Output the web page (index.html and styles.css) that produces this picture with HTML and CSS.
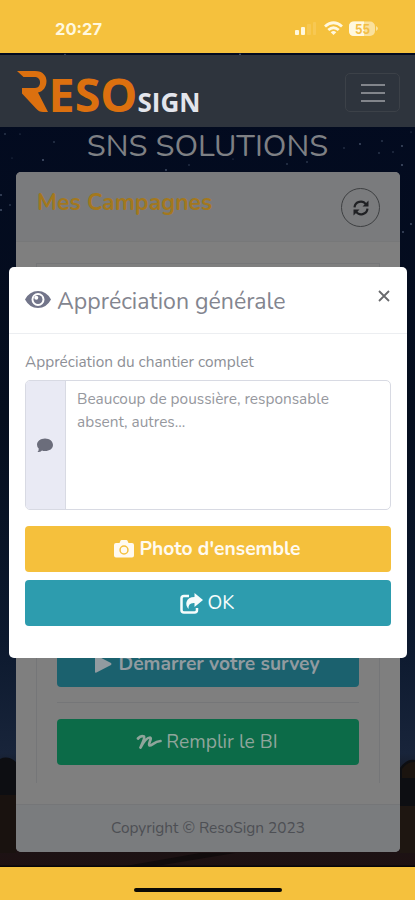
FILE: index.html
```html
<!DOCTYPE html>
<html lang="fr">
<head>
<meta charset="utf-8">
<meta name="viewport" content="width=device-width">
<title>ResoSign</title>
<link rel="stylesheet" href="styles.css">
</head>
<body>
<div class="phone">
  <header class="status">
    <span class="clock">20:27</span>
    <svg class="signals" width="90" height="20" viewBox="0 0 90 20">
      <g fill="#fff8df"><rect x="0" y="11" width="4" height="5" rx="1"/><rect x="6" y="8" width="4" height="8" rx="1"/></g>
      <g fill="#f7c853"><rect x="12" y="5" width="4" height="11" rx="1"/><rect x="18" y="3" width="3" height="13" rx="1"/></g>
      <g fill="none" stroke="#fff8df" stroke-width="2.800"><path d="M30 7.500Q38.500 0 47 7.500"/><path d="M33.300 11Q38.500 6.500 43.700 11"/></g>
      <path d="M35.700 13.200Q38.500 11 41.300 13.200L38.500 16Z" fill="#fff8df"/>
      <rect x="54" y="2.500" width="26" height="14.500" rx="5" fill="#fae19d"/>
      <path d="M59 2.500H69V17H59Q54 17 54 12V7.500Q54 2.500 59 2.500Z" fill="#fff8df"/>
      <path d="M81 7Q85 9.500 81 12Z" fill="#fae19d"/>
      <text x="60" y="14.500" textLength="15" lengthAdjust="spacingAndGlyphs" class="battery">55</text>
    </svg>
  </header>

  <main class="page">
    <svg class="sky" viewBox="0 53 415 814" preserveAspectRatio="none">
      <defs><linearGradient id="night" x1="0" y1="0" x2="0" y2="1">
        <stop offset="0" stop-color="#020a20"/><stop offset=".45" stop-color="#050e1e"/><stop offset=".72" stop-color="#0c192e"/><stop offset=".86" stop-color="#18243a"/><stop offset=".9" stop-color="#15151a"/><stop offset="1" stop-color="#1e1112"/>
      </linearGradient></defs>
      <rect y="53" width="415" height="814" fill="url(#night)"/>
      <path d="M0 759Q8 755 16 762V800H0ZM400 768Q407 758 415 760V806H400Z" fill="#0d0e12"/>
      <path d="M402 769Q408 761 415 762V778H402Z" fill="#1b140f"/>
      <path d="M0 795H16V853H0Z" fill="#19120f"/>
      <path d="M400 806H415V853H400Z" fill="#1e1611"/>
      <path d="M150 867L235 853H200L120 867Z" fill="#110b0c"/>
      <path d="M0 865.500H415V867H0Z" fill="#080608"/>
      <g fill="#46526a"><circle cx="5" cy="134" r=".8"/><circle cx="20" cy="134" r=".6"/><circle cx="54" cy="142" r=".8"/><circle cx="43" cy="160" r="1.100"/><circle cx="12" cy="158" r=".5"/><circle cx="1" cy="195" r=".9"/><circle cx="10" cy="205" r=".8"/><circle cx="1" cy="210" r="1"/><circle cx="166" cy="170" r=".9"/><circle cx="189" cy="165" r=".7"/><circle cx="233" cy="159" r=".6"/><circle cx="287" cy="164" r=".8"/><circle cx="307" cy="162" r=".8"/><circle cx="344" cy="148" r=".7"/><circle cx="360" cy="144" r=".9"/><circle cx="382" cy="141" r=".8"/><circle cx="379" cy="153" r=".8"/><circle cx="393" cy="152" r=".7"/><circle cx="402" cy="146" r=".9"/><circle cx="402" cy="165" r="1"/><circle cx="411" cy="132" r=".6"/><circle cx="411" cy="224" r=".9"/><circle cx="403" cy="232" r=".9"/><circle cx="65" cy="54.500" r=".8"/><circle cx="240" cy="54.500" r="1"/></g>
    </svg>

    <nav class="navbar">
      <svg class="brand" width="194" height="70" viewBox="14 56 194 70">
        <path d="M17 71H35C43 71 46.500 76 46.500 81C46.500 87 43 91.500 38 92.500L48 112H43Q39 112 36 108.500L22 93.500V88H35C38.500 88 40 85 40 82.500C40 79 38 77 34 77H23.500Z" fill="#dc700f"/>
        <text x="48.500" y="111.500" textLength="89" lengthAdjust="spacingAndGlyphs" class="logo-main">ESO</text>
        <text x="137.500" y="111.500" textLength="63" lengthAdjust="spacingAndGlyphs" class="logo-sub">SIGN</text>
      </svg>
      <div class="toggler"><i></i><i></i><i></i></div>
    </nav>

    <h1 class="company"><span>SNS SOLUTIONS</span></h1>

    <section class="card">
      <header class="card-header">
        <h2>Mes Campagnes</h2>
        <div class="refresh">
          <svg width="18" height="18" viewBox="0 0 18 18" fill="none" stroke="#202124" stroke-width="2.200"><path d="M2.500 8.300A6.300 6.300 0 0 1 14 5.500M15.500 9.700A6.300 6.300 0 0 1 4 12.500"/><path d="M16.500 1.500V7.500H10.500ZM1.500 16.500V10.500H7.500Z" fill="#202124" stroke="none"/></svg>
        </div>
      </header>
      <div class="card-body">
        <div class="campaign">
          <div class="btn survey"><svg width="17" height="18" viewBox="0 0 17 18"><path d="M0 1Q0 0 1.500 .5L16 8Q17 9 16 10L1.500 17.500Q0 18 0 17Z" fill="#929ba0"/></svg><span>Démarrer votre survey</span></div>
          <div class="rule"></div>
          <div class="btn fill"><svg width="26" height="17" viewBox="0 0 26 17" fill="none" stroke="#8fa59b" stroke-width="2.700" stroke-linecap="round" stroke-linejoin="round"><path d="M2 4.500Q5 1 8 2.500C9 4 7 8 4.500 13.500Q10 3.500 14 3.500C16.500 4 11.500 10.500 13.500 11.500C16 12 18 7.500 24.500 7"/></svg><span>Remplir le BI</span></div>
        </div>
      </div>
      <footer class="card-footer"><span>Copyright © ResoSign 2023</span></footer>
    </section>

    <div class="modal">
      <header class="modal-header">
        <svg class="eye" width="26" height="19" viewBox="0 0 26 19"><path fill-rule="evenodd" d="M0 9.500Q4.500 1 13 1T26 9.500Q21.500 18 13 18T0 9.500ZM13 3A6.500 6.500 0 1 0 13 16A6.500 6.500 0 1 0 13 3Z" fill="#72758a"/><circle cx="13" cy="9.500" r="4.500" fill="#72758a"/><circle cx="11.300" cy="7.800" r="2" fill="#fff"/></svg>
        <h3>Appréciation générale</h3>
        <svg class="close" width="12" height="12" viewBox="0 0 12 12"><path d="M1 1L11 11M11 1L1 11" stroke="#68696c" stroke-width="1.800"/></svg>
      </header>
      <div class="modal-body">
        <label>Appréciation du chantier complet</label>
        <div class="field">
          <div class="addon"><svg width="16" height="15" viewBox="0 0 16 15"><path d="M8 .5C12.500 .5 16 3.300 16 7S12.500 13 8 13Q6.300 13 5 12.500Q3 14.500 .5 14Q2 12.500 1.700 10.500Q0 9 0 6.700C0 3.300 3.500 .5 8 .5Z" fill="#6b6d7b"/></svg></div>
          <p><span class="line-a">Beaucoup de poussière, responsable</span><br><span class="line-b">absent, autres...</span></p>
        </div>
        <div class="btn photo"><svg width="20" height="18" viewBox="0 0 20 18"><path fill-rule="evenodd" d="M2 3H5.500L6.500 .8Q6.800 0 7.700 0H12.300Q13.200 0 13.500 .8L14.500 3H18Q20 3 20 5V15.500Q20 17.500 18 17.500H2Q0 17.500 0 15.500V5Q0 3 2 3ZM10 5.300A4.700 4.700 0 1 0 10 14.700A4.700 4.700 0 1 0 10 5.300ZM10 6.800A3.200 3.200 0 1 1 10 13.200A3.200 3.200 0 1 1 10 6.800Z" fill="#fffaf0"/></svg><span>Photo d'ensemble</span></div>
        <div class="btn ok"><svg width="23" height="21" viewBox="0 0 23 21"><path d="M9 3H4Q1.500 3 1.500 5.500V17Q1.500 19.500 4 19.500H14.500Q17 19.500 17 17V15" fill="none" stroke="#f5fcfc" stroke-width="2.500"/><path d="M14.500 0L23 7L14.500 14V10Q8 9.500 8.500 16Q5.500 12.500 6.500 9Q8 4 14.500 4Z" fill="#f5fcfc"/></svg><span>OK</span></div>
      </div>
    </div>
  </main>

  <div class="home"><i></i></div>
</div>
</body>
</html>
```
FILE: styles.css
```css
* { box-sizing: border-box; }
body { margin: 0; font-family: Nunito, Lato, "Open Sans", sans-serif; }
h1, h2, h3, p { margin: 0; font-weight: 400; }
svg { display: block; flex: none; }
span, h2, h3, label { white-space: nowrap; }

.phone { width: 415px; height: 900px; display: flex; flex-direction: column; overflow: hidden; background: #f5c13d; }
.status { height: 53px; flex: none; display: flex; justify-content: space-between; padding: 19px 30px 0 55px; }
.clock { font: 700 16.5px/20px Inter, sans-serif; color: #fff8df; }
.battery { font: 700 13px Inter, sans-serif; fill: #f3bd45; }

.page { position: relative; flex: 1; display: flex; flex-direction: column; }
.sky { position: absolute; inset: 0; width: 100%; height: 100%; }
.navbar { position: relative; height: 72px; margin-top: 2px; flex: none; display: flex; align-items: flex-start; justify-content: space-between; padding: 1px 15px 0 14px; background: #2e343d; }
.brand { overflow: visible; }
.logo-main { font: 700 47px/1 "Open Sans", sans-serif; fill: #dc700f; }
.logo-sub { font: 700 27px/1 "Open Sans", sans-serif; fill: #e3e5ec; }
.toggler { width: 55px; height: 39px; margin-top: 17px; border: 1px solid #3c4148; border-radius: 5px; display: flex; flex-direction: column; align-items: center; justify-content: center; gap: 6px; }
.toggler i { width: 24px; height: 2px; background: #82858b; }
.company { position: relative; height: 45px; flex: none; text-align: center; font-size: 30.8px; line-height: 38px; color: #7e8084; }

.card { position: relative; width: 384px; height: 680px; margin-left: 16px; display: flex; flex-direction: column; border-radius: 5px; overflow: hidden; background: #7f7f7f; }
.card-header { height: 70px; flex: none; display: flex; justify-content: space-between; padding: 16px 20px 0 21px; background: #7a7b7d; border-bottom: 1px solid #777879; }
.card-header h2 { font-weight: 700; font-size: 23px; line-height: 29px; color: #a3781d; }
.refresh { width: 39px; height: 39px; border: 1px solid #3e4042; border-radius: 50%; display: flex; align-items: center; justify-content: center; }
.card-body { flex: 1; padding: 21px 20px 20px 20px; }
.campaign { height: 520px; border: 1px solid #757678; border-bottom: 0; padding: 0 20px 18px; display: flex; flex-direction: column; justify-content: flex-end; }
.card-footer { height: 48px; flex: none; background: #7a7c7e; border-top: 1px solid #757678; text-align: center; font-size: 15.4px; line-height: 45px; color: #4d4f54; }

.btn { height: 46px; flex: none; display: flex; align-items: center; justify-content: center; border-radius: 4px; font-size: 19.25px; line-height: 24px; }
.survey { background: #1b616e; color: #929ba0; font-weight: 700; gap: 6px; padding-right: 1px; }
.fill { background: #0c6b48; color: #8fa59b; gap: 4px; padding-right: 2px; }
.rule { height: 1px; margin: 15px 0 16px; background: #757678; }

.modal { position: absolute; left: 9px; top: 214px; width: 398px; height: 391px; background: #fff; border-radius: 5px; }
.modal-header { height: 67px; display: flex; align-items: flex-start; padding: 0 17px 0 16px; border-bottom: 1px solid #eceef1; }
.eye { margin-top: 23px; }
.modal-header h3 { margin: 18px 0 0 6px; font-size: 23.1px; line-height: 34px; color: #83858f; }
.close { margin: 23px 0 0 auto; }
.modal-body { padding: 17px 16px 0; display: flex; flex-direction: column; }
label { font-size: 15.4px; line-height: 22px; height: 29px; color: #8d8f96; }
.field { height: 130px; display: flex; border: 1px solid #d8dae3; border-radius: 5px; overflow: hidden; margin-bottom: 16px; }
.addon { width: 40px; flex: none; display: flex; align-items: center; justify-content: center; background: #e9eaf4; border-right: 1px solid #d8dae3; }
.addon svg { margin-right: 1px; }
.field p { padding: 6px 0 0 11px; font-size: 15.4px; line-height: 23px; color: #96989e; }
.photo { background: #f5c03c; color: #fffaf0; font-weight: 700; gap: 5px; margin-bottom: 8px; padding-right: 1px; }
.ok { background: #2d9cae; color: #f5fcfc; gap: 5px; padding-right: 2px; }

.home { height: 33px; flex: none; display: flex; justify-content: center; padding-top: 21px; background: #f5c13d; }
.home i { width: 148px; height: 4px; border-radius: 2px; background: #0b0a05; }
```
